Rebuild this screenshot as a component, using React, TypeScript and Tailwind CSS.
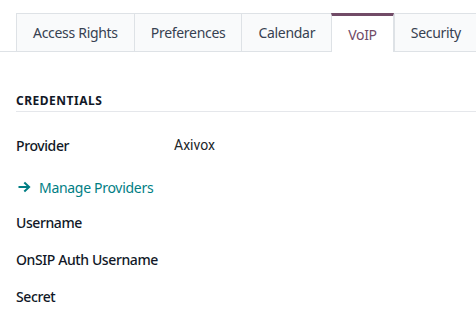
import React from "react";

const tabs = ["Access Rights", "Preferences", "Calendar", "VoIP", "Security"];

export default function App() {
  return (
    <div className="w-[476px] h-[313px] overflow-hidden bg-white text-[#212529]" style={{ fontFamily: '"Noto Sans", "Open Sans", sans-serif' }}>
      <div className="pt-[13px]">
        <div className="flex border-b border-[#dee2e6] pl-4 h-[39px]">
          {tabs.map((t) => {
            const active = t === "VoIP";
            return (
              <div
                key={t}
                className={
                  active
                    ? "flex items-center px-4 bg-white border-t-[3px] border-t-[#714b67] border-x border-x-[#dee2e6] -mb-px text-[14px] tracking-[-0.3px] text-[#714b67] shrink-0"
                    : "flex items-center px-4 bg-[#f9fafb] border-t border-l border-[#dee2e6] last:border-r text-[14px] tracking-[-0.3px] text-[#374151] shrink-0"
                }
              >
                {t}
              </div>
            );
          })}
        </div>
      </div>
      <div className="pl-4 pt-[41px]">
        <div className="text-[12px] font-bold tracking-[0.5px] text-[#111827] pb-[2px] border-b border-[#e5e7eb] leading-[16px]">CREDENTIALS</div>
        <div className="flex items-center h-[20px] mt-[23px] text-[14px]">
          <div className="w-[158px] font-medium tracking-[-0.4px] text-[#111827]">Provider</div>
          <div className="text-[#212529]" style={{ fontFamily: 'Roboto, "Liberation Sans", sans-serif' }}>Axivox</div>
        </div>
        <div className="flex items-center h-[20px] mt-[22px] text-[14px] tracking-[-0.3px] text-[#017e84]">
          <svg width="13" height="12" viewBox="0 0 13 12" className="ml-[2px] mr-[8px]" fill="#017e84">
            <path d="M7 0.8 L12.6 6 L7 11.2 L5.6 9.8 L8.6 7 H0.5 V5 H8.6 L5.6 2.2 Z" />
          </svg>
          <span>Manage Providers</span>
        </div>
        <div className="flex items-center h-[20px] mt-[15px] text-[14px] font-medium tracking-[-0.4px] text-[#111827]">Username</div>
        <div className="flex items-center h-[20px] mt-[17px] text-[14px] font-medium tracking-[-0.4px] text-[#111827]">OnSIP Auth Username</div>
        <div className="flex items-center h-[20px] mt-[17px] text-[14px] font-medium tracking-[-0.4px] text-[#111827]">Secret</div>
      </div>
    </div>
  );
}
